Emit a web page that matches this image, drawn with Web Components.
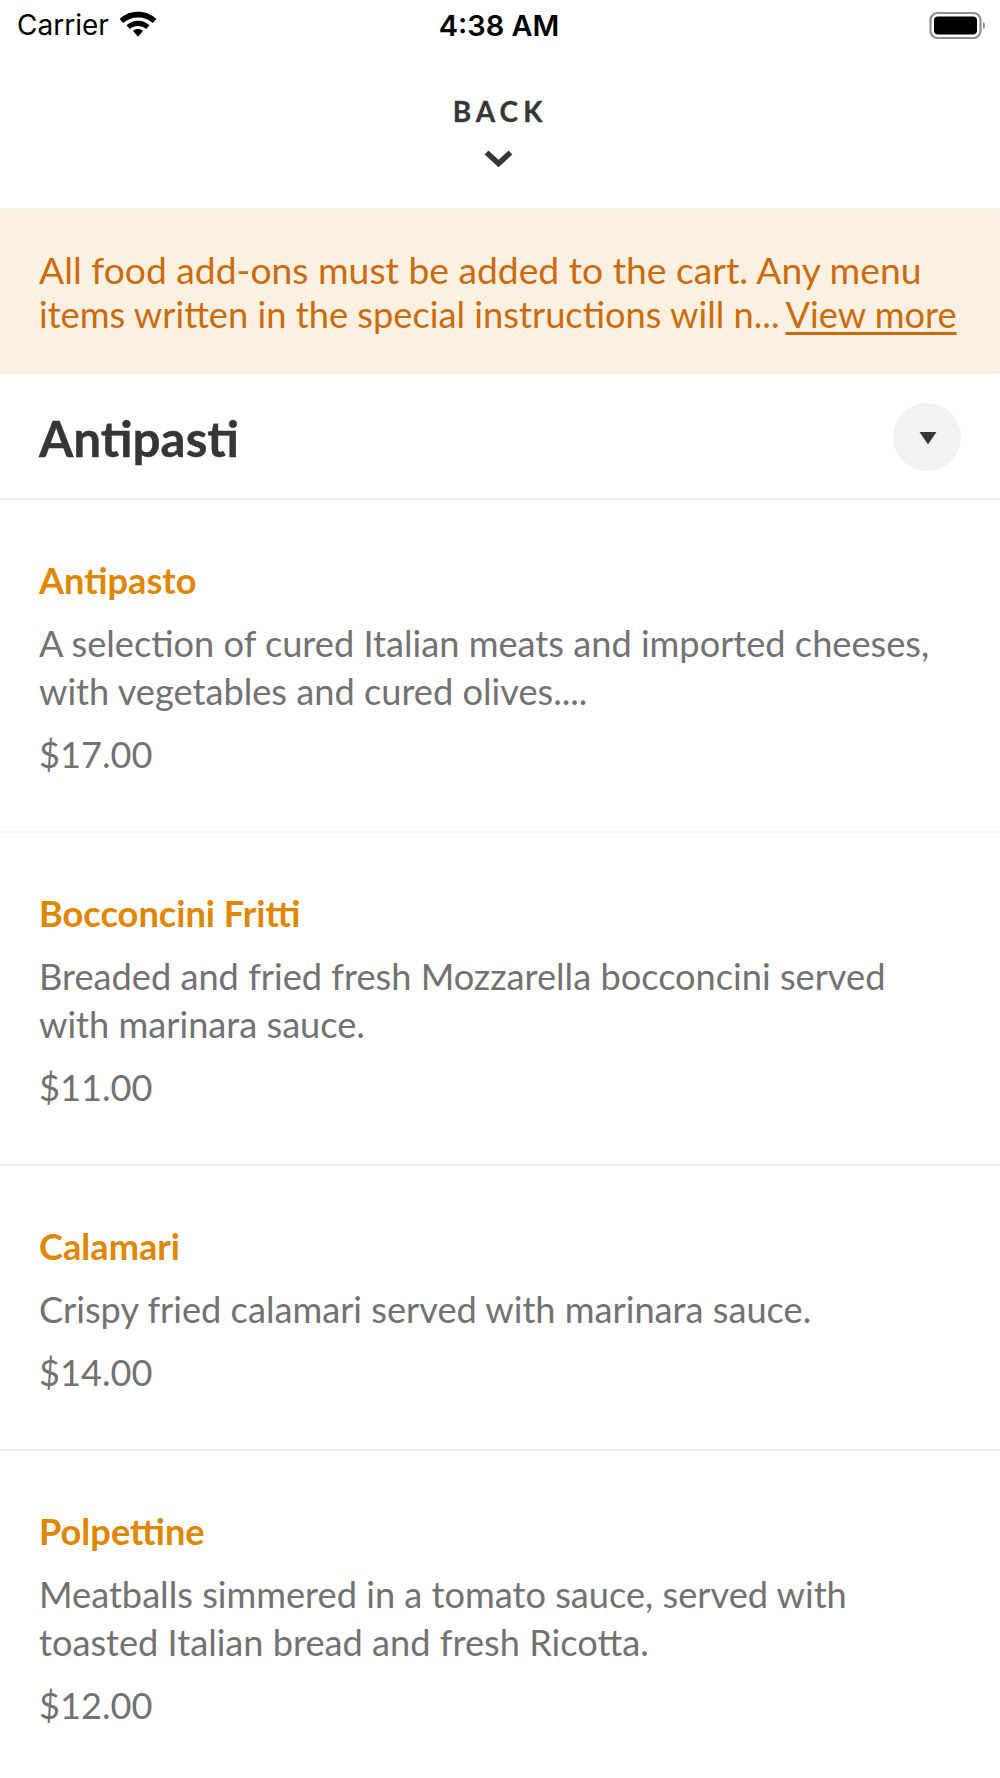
<!DOCTYPE html>
<html><head><meta charset="utf-8">
<style>
html,body{margin:0;padding:0;background:#fff;}
body{font-family:Lato,"Noto Sans",sans-serif;width:1000px;height:1778px;overflow:hidden;}
</style></head><body>
<status-bar></status-bar>
<back-header></back-header>
<notice-banner><span style="font-size:37.250px">All food add-ons must be added to the cart. Any menu</span><br>items written in the special instructions will n...<a slot="more">View more</a></notice-banner>
<section-head>Antipasti</section-head>
<menu-item name="Antipasto" price="$17.00">A selection of cured Italian meats and imported cheeses,<br>with vegetables and cured olives....</menu-item>
<menu-item name="Bocconcini Fritti" price="$11.00">Breaded and fried fresh Mozzarella bocconcini served<br>with marinara sauce.</menu-item>
<menu-item name="Calamari" price="$14.00">Crispy fried calamari served with marinara sauce.</menu-item>
<menu-item name="Polpettine" price="$12.00" last>Meatballs simmered in a tomato sauce, served with<br>toasted Italian bread and fresh Ricotta.</menu-item>
<script>
function def(name,html){
  customElements.define(name,class extends HTMLElement{
    constructor(){super();this.attachShadow({mode:'open'}).innerHTML=html;}
    connectedCallback(){
      if(name==='menu-item'){
        this.shadowRoot.querySelector('.n').textContent=this.getAttribute('name');
        this.shadowRoot.querySelector('.p').textContent=this.getAttribute('price');
      }
    }
  });
}
def('status-bar',`<style>
:host{display:flex;align-items:center;height:50px;padding:0 16px 0 17px;box-sizing:border-box;font-family:Inter,Roboto,sans-serif;color:#000;position:relative}
.c{font-size:28px;display:flex;align-items:center;gap:11px;flex:1}
.t{position:absolute;left:0;right:0;text-align:center;font-size:29px;font-weight:600;top:9px;line-height:34px;margin-left:-2px}
svg.w{margin-left:-2px;margin-top:-3px}
</style>
<div class="c"><span>Carrier</span>
<svg class="w" width="40" height="29" viewBox="0 0 36 26"><path d="M18 2.500C11.500 2.500 6 4.800 1.500 9L4.600 12.600C8.200 9.300 12.800 7.500 18 7.500S27.800 9.300 31.400 12.600L34.500 9C30 4.800 24.500 2.500 18 2.500Z M18 10.500C14 10.500 10.400 12 7.600 14.600L10.700 18C12.600 16.200 15.200 15.200 18 15.200S23.400 16.200 25.300 18L28.400 14.600C25.600 12 22 10.500 18 10.500Z M18 18C16.200 18 14.700 18.600 13.500 19.700L18 25L22.500 19.700C21.300 18.600 19.800 18 18 18Z" fill="#000"/></svg></div>
<div class="t">4:38 AM</div>
<svg width="56" height="28" viewBox="0 0 56 28" style="margin-top:-1px;margin-right:-1px"><rect x="1.500" y="2" width="50" height="25" rx="7" fill="none" stroke="#8f8f8f" stroke-width="2.200"/><rect x="5" y="5.500" width="43" height="18" rx="4" fill="#000"/><path d="M54 11c1.500 .5 2 2 2 3.500s-.5 3-2 3.500z" fill="#8f8f8f"/></svg>`);
def('back-header',`<style>
:host{display:flex;flex-direction:column;align-items:center;height:160px;box-sizing:border-box;padding-top:45px;border-bottom:2px solid #f0f0f0;color:#363636}
.b{font-size:28px;font-weight:700;letter-spacing:5px;line-height:32px;margin-right:0;-webkit-text-stroke:.3px #363636}
svg{display:block;margin-top:22px;margin-left:-4px}
</style><div class="b">BACK</div>
<svg width="31" height="19" viewBox="0 0 31 19"><path d="M3.500 3.500L15.500 14.500L27.500 3.500" fill="none" stroke="#363636" stroke-width="5.500"/></svg>`);
def('notice-banner',`<style>
:host{display:block;background:#faf1e2;color:#cd6b0a;font-size:36.250px;line-height:44px;padding:38px 39px 38px;height:164px;box-sizing:border-box;white-space:nowrap}
::slotted(a){text-decoration:underline;text-underline-offset:4px;margin-left:6px}
</style><slot></slot><slot name="more"></slot>`);
def('section-head',`<style>
:host{display:flex;align-items:center;justify-content:space-between;height:126px;box-sizing:border-box;padding:2px 39px 0;border-bottom:2px solid #f0f0f0;color:#363636;font-size:49.400px;font-weight:700}
.t{position:relative;top:1px;-webkit-text-stroke:.4px #363636}
.r{width:68px;height:68px;border-radius:50%;background:#f2f2f2;display:flex;align-items:center;justify-content:center}
svg{margin:2px 0 0 2px}
</style><span class="t"><slot></slot></span>
<div class="r"><svg width="18" height="14" viewBox="0 0 18 14"><path d="M.5 1H17.500L9 13.500Z" fill="#363636"/></svg></div>`);
def('menu-item',`<style>
:host{display:block;padding:58px 39px 53px;border-bottom:2px solid #f0f0f0;color:#727272;font-size:36.200px}
:host([last]){border-bottom:none}
.n{color:#e08600;font-size:36.200px;font-weight:700;line-height:44px}
.d{line-height:48px;margin-top:17px}
.p{line-height:48px;margin-top:15px}
</style><div class="n"></div><div class="d"><slot></slot></div><div class="p"></div>`);
</script>
</body></html>
